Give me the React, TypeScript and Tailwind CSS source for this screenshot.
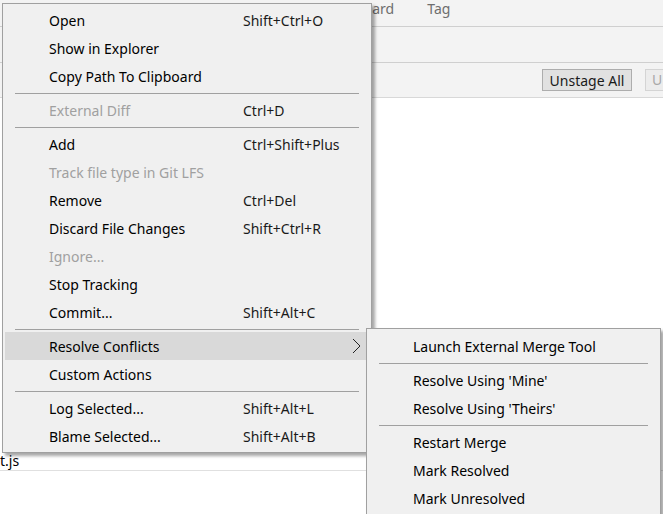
import React from "react";

type Entry =
  | { kind: "item"; label: string; shortcut?: string; disabled?: boolean; active?: boolean; sub?: boolean }
  | { kind: "sep" };

const mainMenu: Entry[] = [
  { kind: "item", label: "Open", shortcut: "Shift+Ctrl+O" },
  { kind: "item", label: "Show in Explorer" },
  { kind: "item", label: "Copy Path To Clipboard" },
  { kind: "sep" },
  { kind: "item", label: "External Diff", shortcut: "Ctrl+D", disabled: true },
  { kind: "sep" },
  { kind: "item", label: "Add", shortcut: "Ctrl+Shift+Plus" },
  { kind: "item", label: "Track file type in Git LFS", disabled: true },
  { kind: "item", label: "Remove", shortcut: "Ctrl+Del" },
  { kind: "item", label: "Discard File Changes", shortcut: "Shift+Ctrl+R" },
  { kind: "item", label: "Ignore...", disabled: true },
  { kind: "item", label: "Stop Tracking" },
  { kind: "item", label: "Commit...", shortcut: "Shift+Alt+C" },
  { kind: "sep" },
  { kind: "item", label: "Resolve Conflicts", active: true, sub: true },
  { kind: "item", label: "Custom Actions" },
  { kind: "sep" },
  { kind: "item", label: "Log Selected...", shortcut: "Shift+Alt+L" },
  { kind: "item", label: "Blame Selected...", shortcut: "Shift+Alt+B" },
];

const subMenu: Entry[] = [
  { kind: "item", label: "Launch External Merge Tool" },
  { kind: "sep" },
  { kind: "item", label: "Resolve Using 'Mine'" },
  { kind: "item", label: "Resolve Using 'Theirs'" },
  { kind: "sep" },
  { kind: "item", label: "Restart Merge" },
  { kind: "item", label: "Mark Resolved" },
  { kind: "item", label: "Mark Unresolved" },
];

function MenuRows({ entries }: { entries: Entry[] }) {
  return (
    <>
      {entries.map((e, i) =>
        e.kind === "sep" ? (
          <div key={i} className="h-[6px] flex items-center px-[10px]">
            <div className="h-px w-full bg-[#a0a0a0]" />
          </div>
        ) : (
          <div
            key={i}
            className={`h-[28px] flex items-center pl-[44px] ${e.active ? "bg-[#d9d9d9]" : ""} ${
              e.disabled ? "text-[#a0a0a0]" : "text-black"
            }`}
          >
            <span className="w-[194px] shrink-0 whitespace-nowrap">{e.label}</span>
            {e.shortcut && <span className="whitespace-nowrap text-[#1a1a1a]">{e.shortcut}</span>}
            {e.sub && (
              <svg className="ml-auto mr-[8px]" width="9" height="16" viewBox="0 0 9 16">
                <polyline points="1,1 8,8 1,15" fill="none" stroke="#222" strokeWidth="1" />
              </svg>
            )}
          </div>
        )
      )}
    </>
  );
}

export default function App() {
  return (
    <div className="relative w-[663px] h-[514px] overflow-hidden bg-white text-[14px] font-['Noto_Sans',sans-serif]">
      {/* app behind the menu */}
      <div className="flex flex-col">
        <div className="h-[26px] bg-[#f3f3f3] flex items-start leading-[18px] text-[#6e6e6e]">
          <span className="ml-[345px]">Discard</span>
          <span className="ml-[33px]">Tag</span>
        </div>
        <div className="h-[36px] bg-[#f3f3f3] border-t border-[#cfcfcf]" />
        <div className="h-[35px] bg-[#f3f3f3] border-t border-[#cfcfcf] flex items-center justify-end gap-[13px]">
          <div className="h-[22px] w-[90px] border border-[#adadad] bg-[#e1e1e1] flex items-center justify-center text-[#1a1a1a]">
            Unstage All
          </div>
          <div className="h-[22px] w-[18px] border border-r-0 border-[#d4d4d4] bg-[#ececec] pl-[6px] text-[#a8a8a8] leading-[20px] overflow-hidden">
            U
          </div>
        </div>
        <div className="h-[354px] bg-white border-t border-[#d8d8d8]" />
        <div className="h-[19px] bg-white text-black flex items-end leading-[18px]">t.js</div>
        <div className="h-[43px] bg-white border-t border-[#e0e0e0]" />
      </div>

      {/* context menu */}
      <div className="absolute left-[2px] top-[3px] w-[370px] border border-[#a0a0a0] bg-[#f0f0f0] p-[2px] shadow-[3px_3px_3px_rgba(0,0,0,0.35)]">
        <MenuRows entries={mainMenu} />
      </div>

      {/* submenu */}
      <div className="absolute left-[366px] top-[328px] w-[295px] border border-[#a0a0a0] bg-[#f0f0f0] px-[2px] pt-[3px] pb-[2px] shadow-[3px_3px_3px_rgba(0,0,0,0.35)]">
        <MenuRows entries={subMenu} />
      </div>
    </div>
  );
}
